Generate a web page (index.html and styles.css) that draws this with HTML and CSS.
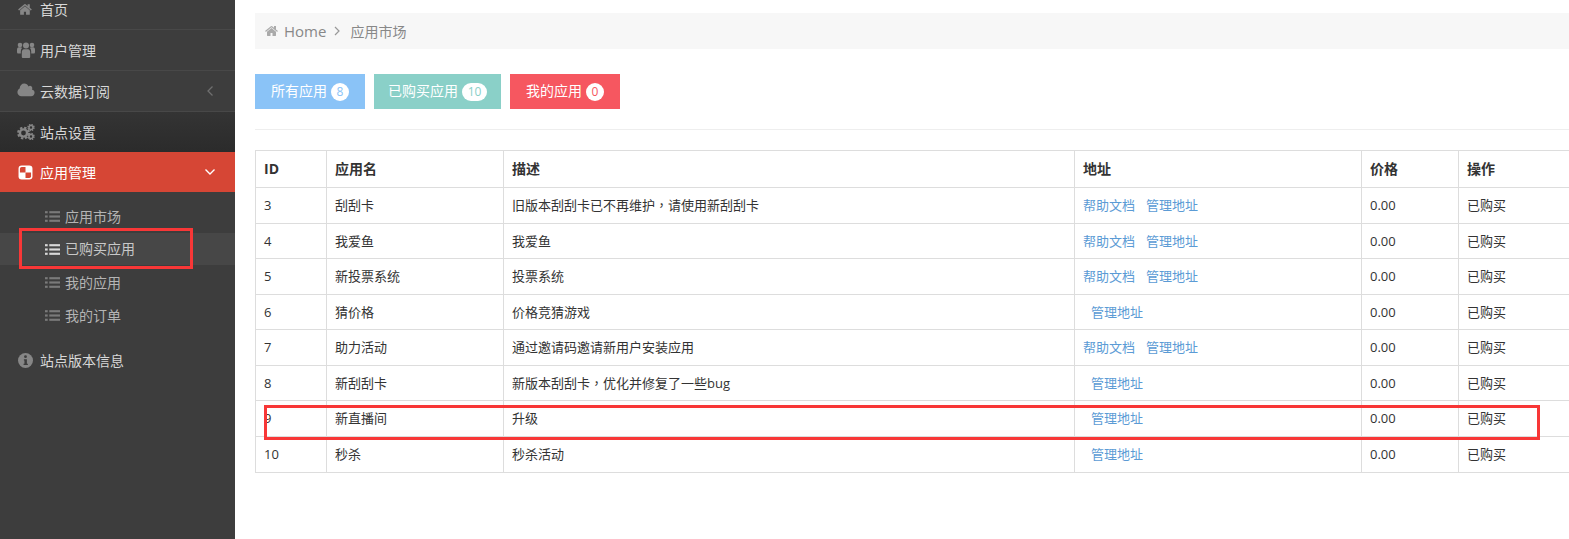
FILE: index.html
```html
<!DOCTYPE html>
<html lang="zh-CN">
<head>
<meta charset="utf-8">
<title>应用市场</title>
<link rel="stylesheet" href="styles.css">
</head>
<body>
<svg class="defs" width="0" height="0" aria-hidden="true">
  <symbol id="i-home" viewBox="0 0 1792 1792"><path d="M1408 992v480q0 26-19 45t-45 19h-384v-384h-256v384h-384q-26 0-45-19t-19-45v-480q0-1 .5-3t.5-3l575-474 575 474q1 2 1 6zm223-69l-62 74q-8 9-21 11h-3q-13 0-21-7l-692-577-692 577q-12 8-24 7-13-2-21-11l-62-74q-8-10-7-23.500t11-21.500l719-599q32-26 76-26t76 26l244 204v-195q0-14 9-23t23-9h192q14 0 23 9t9 23v408l219 182q10 8 11 21.500t-7 23.500z"/></symbol>
  <symbol id="i-list" viewBox="0 0 14 12"><rect x="0" y="1" width="2.500" height="2"/><rect x="0" y="5" width="2.500" height="2"/><rect x="0" y="9" width="2.500" height="2"/><rect x="4" y="1" width="10" height="2"/><rect x="4" y="5" width="10" height="2"/><rect x="4" y="9" width="10" height="2"/></symbol>
</svg>
<div class="layout">
  <aside class="sidebar">
    <nav class="menu">
      <a class="item item-first"><svg class="ic"><use href="#i-home"/></svg><span>首页</span></a>
      <a class="item"><svg class="ic ic-wide" viewBox="0 0 18 16"><circle cx="9" cy="3.600" r="3"/><circle cx="3" cy="3" r="2.300"/><circle cx="15" cy="3" r="2.300"/><path d="M4.800 15V10.500Q4.800 7.500 7 7.200h4q2.200 .3 2.200 3.300V15q0 1-1 1H5.800q-1 0-1-1zM0 10V7.500Q0 5.600 1.500 5.300h2.300q.8 0 1.200 .6Q3.800 7 3.800 9.500V11.500H1q-1 0-1-1.500zM18 10V7.500q0-1.900-1.500-2.200h-2.300q-.8 0-1.200 .6 1.200 1.100 1.200 3.600V11.500h2.800q1 0 1-1.500z"/></svg><span>用户管理</span></a>
      <a class="item"><svg class="ic ic-wide" viewBox="0 0 1920 1792"><path d="M1920 1088q0 159-112.500 271.500t-271.500 112.500h-1088q-185 0-316.500-131.500t-131.500-316.500q0-132 71-241.500t187-163.500q-2-28-2-43 0-212 150-362t362-150q158 0 286.500 88t187.500 230q70-62 166-62 106 0 181 75t75 181q0 75-41 138 129 30 213 134.500t84 239.500z"/></svg><span>云数据订阅</span><svg class="arrow" viewBox="0 0 8 12"><path d="M6.500 1.500 2 6l4.500 4.500" fill="none" stroke="#6f6f6f" stroke-width="1.300"/></svg></a>
      <a class="item item-dark"><svg class="ic ic-wide" viewBox="0 0 18 16"><circle cx="6.500" cy="9" r="3.600" fill="none" stroke-width="2.400" class="gear"/><circle cx="6.500" cy="9" r="5.400" fill="none" stroke-width="2" stroke-dasharray="2.400 1.840" class="gear"/><circle cx="14" cy="3.500" r="2" fill="none" stroke-width="1.600" class="gear"/><circle cx="14" cy="3.500" r="3" fill="none" stroke-width="1.400" stroke-dasharray="1.400 .96" class="gear"/><circle cx="14" cy="12.500" r="2" fill="none" stroke-width="1.600" class="gear"/><circle cx="14" cy="12.500" r="3" fill="none" stroke-width="1.400" stroke-dasharray="1.400 .96" class="gear"/></svg><span>站点设置</span></a>
      <a class="item item-active"><svg class="ic ic-app" viewBox="0 0 14 14"><rect x=".5" y=".5" width="13" height="13" rx="3" fill="#fff"/><path d="M7 7H1.800V3.500Q1.800 1.800 3.500 1.800H7z" fill="#d64635"/><path d="M7 7h5.200v3.500q0 1.700-1.700 1.700H7z" fill="#d64635"/></svg><span>应用管理</span><svg class="arrow" viewBox="0 0 12 8"><path d="M1.500 1.500 6 6l4.500-4.500" fill="none" stroke="#fff" stroke-width="1.400"/></svg></a>
      <ul class="submenu">
        <li class="sub"><svg class="ic-list"><use href="#i-list"/></svg><span>应用市场</span></li>
        <li class="sub sub-current"><svg class="ic-list"><use href="#i-list"/></svg><span>已购买应用</span></li>
        <li class="sub"><svg class="ic-list"><use href="#i-list"/></svg><span>我的应用</span></li>
        <li class="sub"><svg class="ic-list"><use href="#i-list"/></svg><span>我的订单</span></li>
      </ul>
      <a class="item item-plain"><svg class="ic" viewBox="0 0 14 14"><circle cx="7" cy="7" r="7"/><circle cx="7" cy="3.400" r="1.300" class="cut"/><path d="M5.500 5.800H8.300V10H9.200V11.300H5.200V10H6V7H5.500z" class="cut"/></svg><span>站点版本信息</span></a>
    </nav>
  </aside>
  <main class="main">
    <div class="breadcrumb">
      <svg class="bc-home"><use href="#i-home"/></svg>
      <span class="bc-root">Home</span>
      <svg class="bc-sep" viewBox="0 0 6 10"><path d="M1 1l4 4-4 4" fill="none" stroke="#999" stroke-width="1.200"/></svg>
      <span>应用市场</span>
    </div>
    <div class="tabs">
      <a class="tab tab-blue">所有应用<span class="badge">8</span></a>
      <a class="tab tab-teal">已购买应用<span class="badge">10</span></a>
      <a class="tab tab-red">我的应用<span class="badge">0</span></a>
    </div>
    <hr class="rule">
    <table class="apps">
      <colgroup>
        <col class="c-id"><col class="c-name"><col class="c-desc"><col class="c-addr"><col class="c-price"><col class="c-op">
      </colgroup>
      <thead>
        <tr><th>ID</th><th>应用名</th><th>描述</th><th>地址</th><th>价格</th><th>操作</th></tr>
      </thead>
      <tbody>
        <tr><td>3</td><td>刮刮卡</td><td>旧版本刮刮卡已不再维护<span class="punct" lang="zh-Hant">，</span>请使用新刮刮卡</td><td><a class="lnk">帮助文档</a><a class="lnk lnk-next">管理地址</a></td><td>0.00</td><td>已购买</td></tr>
        <tr><td>4</td><td>我爱鱼</td><td>我爱鱼</td><td><a class="lnk">帮助文档</a><a class="lnk lnk-next">管理地址</a></td><td>0.00</td><td>已购买</td></tr>
        <tr><td>5</td><td>新投票系统</td><td>投票系统</td><td><a class="lnk">帮助文档</a><a class="lnk lnk-next">管理地址</a></td><td>0.00</td><td>已购买</td></tr>
        <tr><td>6</td><td>猜价格</td><td>价格竞猜游戏</td><td><a class="lnk lnk-solo">管理地址</a></td><td>0.00</td><td>已购买</td></tr>
        <tr><td>7</td><td>助力活动</td><td>通过邀请码邀请新用户安装应用</td><td><a class="lnk">帮助文档</a><a class="lnk lnk-next">管理地址</a></td><td>0.00</td><td>已购买</td></tr>
        <tr><td>8</td><td>新刮刮卡</td><td>新版本刮刮卡<span class="punct" lang="zh-Hant">，</span>优化并修复了一些bug</td><td><a class="lnk lnk-solo">管理地址</a></td><td>0.00</td><td>已购买</td></tr>
        <tr><td>9</td><td>新直播间</td><td>升级</td><td><a class="lnk lnk-solo">管理地址</a></td><td>0.00</td><td>已购买</td></tr>
        <tr><td>10</td><td>秒杀</td><td>秒杀活动</td><td><a class="lnk lnk-solo">管理地址</a></td><td>0.00</td><td>已购买</td></tr>
      </tbody>
    </table>
  </main>
</div>
<div class="mark mark-menu"></div>
<div class="mark mark-row"></div>
</body>
</html>
```
FILE: styles.css
```css
* { box-sizing: border-box; }
html, body { margin: 0; height: 100%; overflow: hidden; }
body {
  position: relative;
  font-family: "Open Sans", "Noto Sans CJK SC", sans-serif;
  font-size: 14px;
  color: #333;
  background: #fff;
}
.defs { position: absolute; }
.layout { display: flex; height: 539px; }

/* Sidebar */
.sidebar { width: 235px; flex: none; background: #3d3d3d; overflow: hidden; }
.menu { display: flex; flex-direction: column; }
.item {
  display: flex;
  align-items: center;
  height: 41px;
  padding: 0 19px 1px 17px;
  border-bottom: 1px solid #484848;
  color: #d8d8d8;
  font-size: 14px;
}
.item-first { height: 30px; padding-bottom: 11px; }
.item-dark { height: 40px; border-bottom: 0; padding-bottom: 0; background: linear-gradient(#343434, #2b2b2b); }
.item-active { height: 40px; border-bottom: 0; padding-bottom: 0; background: #d64635; color: #fff; }
.item-plain { border-bottom: 0; }
.ic { width: 15px; height: 15px; margin: 0 7px 0 1px; flex: none; fill: #868686; }
.ic-wide { width: 18px; height: 16px; margin: 0 5px 0 0; }
.ic-app { width: 15px; height: 15px; margin: 0 7px 0 1px; }
.gear { stroke: #868686; }
.cut { fill: #3d3d3d; }
.arrow { width: 12px; height: 12px; margin-left: auto; }
.submenu { list-style: none; margin: 0; padding: 8px 0; }
.sub {
  display: flex;
  align-items: center;
  height: 33px;
  padding-left: 45px;
  color: #b4b4b4;
}
.sub span { margin-top: -2px; }
.ic-list { width: 15px; height: 13px; margin-right: 5px; fill: #7a7a7a; }
.sub-current { height: 32px; margin-bottom: 1px; background: #474747; color: #c8c8c8; }
.sub-current .ic-list { fill: #d8d8d8; }

/* Main */
.main { flex: 1; min-width: 0; padding: 13px 0 0 20px; overflow: hidden; }
.breadcrumb {
  display: flex;
  align-items: center;
  height: 36px;
  padding-left: 10px;
  background: #f7f7f7;
  color: #888;
  font-size: 14px;
}
.bc-home { width: 14px; height: 14px; margin-right: 5px; fill: #aaa; }
.bc-root { font-size: 15px; }
.bc-sep { width: 6px; height: 10px; margin: 0 10px 0 8px; }
.tabs { display: flex; gap: 9px; margin-top: 25px; }
.tab {
  display: flex;
  align-items: center;
  height: 35px;
  padding: 0 16px 3px;
  color: #fff;
  font-size: 14px;
}
.tab-blue { background: #8ac3f7; }
.tab-teal { padding: 0 14px 3px; background: #8ad0c8; }
.tab-red { background: #f65760; }
.badge {
  display: flex;
  align-items: center;
  justify-content: center;
  min-width: 18px;
  height: 18px;
  margin: 3px 0 0 4px;
  padding: 0 3px;
  border-radius: 9px;
  background: #fff;
  font-size: 12px;
}
.tab-blue .badge { color: #8ac3f7; }
.tab-teal .badge { color: #8ad0c8; min-width: 25px; }
.tab-red .badge { color: #f65760; }
.rule { height: 1px; margin: 20px 0; border: 0; background: #eee; }

/* Table */
.apps {
  width: 1341px;
  table-layout: fixed;
  border-collapse: collapse;
  font-size: 13px;
  line-height: 1.42857;
}
.c-id { width: 71px; }
.c-name { width: 177px; }
.c-desc { width: 571px; }
.c-addr { width: 287px; }
.c-price { width: 97px; }
.c-op { width: 138px; }
.apps th, .apps td { border: 1px solid #ddd; padding: 8px; text-align: left; vertical-align: middle; }
.apps th { font-size: 14px; font-weight: 700; line-height: 20px; color: #333; }
.punct { font-family: "Noto Sans CJK TC", sans-serif; }
.lnk { color: #5b9bd5; }
.lnk-next { margin-left: 11px; }
.lnk-solo { margin-left: 8px; }

/* Hand-drawn annotations on top of the screenshot */
.mark { position: absolute; border: 3px solid #f83737; }
.mark-menu { left: 19px; top: 228px; width: 174px; height: 41px; }
.mark-row { left: 264px; top: 405px; width: 1276px; height: 35px; }
```
